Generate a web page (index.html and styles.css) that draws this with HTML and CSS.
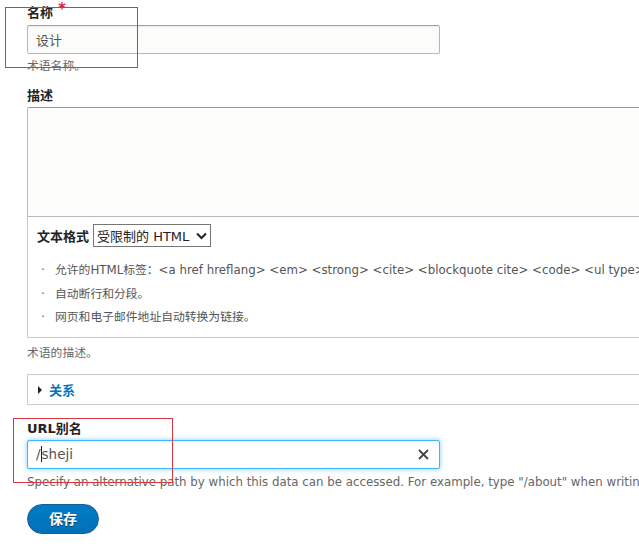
FILE: index.html
```html
<!DOCTYPE html>
<html lang="zh">

<head>
    <meta charset="UTF-8">
    <title>编辑术语</title>
    <link rel="stylesheet" href="styles.css">
</head>

<body>
    <div class="page">
        <div class="form-item item-name">
            <label class="label">名称<span class="required">*</span></label>
            <input class="text-input" type="text" value="设计">
            <div class="description">术语名称。</div>
        </div>

        <div class="form-item item-desc">
            <label class="label">描述</label>
            <textarea class="text-area"></textarea>
            <div class="filter-wrapper">
                <div class="filter-select">
                    <span class="filter-label">文本格式</span>
                    <span class="select-box">受限制的 HTML
                        <svg class="chevron" width="11" height="8" viewBox="0 0 11 8">
                            <path d="M1 1.5 L5.5 6 L10 1.5" fill="none" stroke="#222" stroke-width="2" />
                        </svg>
                    </span>
                </div>
                <ul class="filter-tips">
                    <li>允许的HTML标签：&lt;a href hreflang&gt; &lt;em&gt; &lt;strong&gt; &lt;cite&gt; &lt;blockquote cite&gt; &lt;code&gt; &lt;ul type&gt; &lt;ol start type&gt; &lt;li&gt; &lt;dl&gt; &lt;dt&gt; &lt;dd&gt;</li>
                    <li>自动断行和分段。</li>
                    <li>网页和电子邮件地址自动转换为链接。</li>
                </ul>
            </div>
            <div class="description">术语的描述。</div>
        </div>

        <div class="details">
            <svg class="arrow" width="6" height="8" viewBox="0 0 6 8">
                <path d="M1 0 L5 4 L1 8 Z" fill="#222" />
            </svg>
            <a href="#" class="details-link">关系</a>
        </div>

        <div class="form-item item-url">
            <label class="label">URL别名</label>
            <div class="text-input focused">/<span class="caret"></span>sheji
                <svg class="clear" width="11" height="11" viewBox="0 0 11 11">
                    <path d="M1 1 L10 10 M10 1 L1 10" stroke="#444" stroke-width="1.8" />
                </svg>
            </div>
            <div class="description">Specify an alternative path by which this data can be accessed. For example, type "/about" when writing an about page.</div>
        </div>

        <a href="#" class="button-primary">保存</a>

        <!-- red boxes drawn over the screenshot -->
        <span class="mark mark-name"></span>
        <span class="mark mark-url"></span>
    </div>
</body>

</html>
```

FILE: styles.css
```css
html,
body {
    margin: 0;
    padding: 0;
    overflow: hidden;
    background-color: #fff;
}

body {
    font-family: "DejaVu Sans", "Noto Sans CJK SC", sans-serif;
    font-size: 13px;
    color: #222;
}

.page {
    position: relative;
    width: 900px;
    padding: 4px 0 40px 27px;
}

.form-item {
    width: 100%;
}

.label {
    display: block;
    font-weight: bold;
    font-size: 13px;
    line-height: 18px;
    color: #222;
}

.required {
    color: #e0233c;
    font-size: 15px;
    line-height: 10px;
    vertical-align: top;
    margin-left: 5px;
}

.text-input {
    display: block;
    box-sizing: border-box;
    width: 413px;
    height: 29px;
    margin-top: 3px;
    padding: 0 8px;
    border: 1px solid #b8b8b8;
    border-top-color: #a0a0a0;
    border-radius: 2px;
    background-color: #fcfcfa;
    box-shadow: inset 0 1px 2px rgba(0, 0, 0, 0.08);
    font-family: "DejaVu Sans", "Noto Sans CJK SC", sans-serif;
    font-size: 13px;
    line-height: 27px;
    color: #555;
}

.text-input.focused {
    position: relative;
    margin-top: 2px;
    background-color: #fff;
    border-color: #40b6ff;
    box-shadow: inset 0 1px 2px rgba(0, 0, 0, 0.08), 0 0 5px rgba(64, 182, 255, 0.7);
    font-size: 13.5px;
}

.caret {
    display: inline-block;
    width: 0;
    height: 16px;
    border-left: 1px solid #222;
    vertical-align: -3px;
}

.clear {
    position: absolute;
    right: 10px;
    top: 8px;
}

.description {
    margin-top: 4px;
    font-size: 11.8px;
    line-height: 16px;
    color: #666;
    white-space: nowrap;
}

.item-desc {
    margin-top: 13px;
}

.text-area {
    display: block;
    box-sizing: border-box;
    width: 100%;
    height: 110px;
    margin: 2px 0 0;
    border: 1px solid #b8b8b8;
    border-top-color: #999;
    border-radius: 2px 2px 0 0;
    background-color: #fcfcfa;
    resize: none;
}

.filter-wrapper {
    box-sizing: border-box;
    width: 100%;
    height: 121px;
    padding: 7px 9px 0;
    border: 1px solid #ccc;
    border-top: none;
}

.filter-select {
    display: flex;
    align-items: center;
    gap: 4px;
}

.filter-label {
    font-weight: bold;
    font-size: 13px;
}

.select-box {
    display: inline-flex;
    align-items: center;
    gap: 7px;
    box-sizing: border-box;
    height: 23px;
    padding: 0 3px 0 3px;
    border: 1px solid #767676;
    background-color: #fff;
    font-size: 13px;
    color: #222;
}

.filter-tips {
    list-style: none;
    margin: 12px 0 0;
    padding: 0 0 0 4px;
    font-size: 11.8px;
    line-height: 23.5px;
    color: #555;
    white-space: nowrap;
}

.filter-tips li::before {
    content: "·";
    display: inline-block;
    width: 14px;
    color: #666;
}

.item-desc .description {
    margin-top: 7px;
}

.details {
    display: flex;
    align-items: center;
    gap: 6px;
    box-sizing: border-box;
    width: 100%;
    height: 31px;
    margin-top: 13px;
    padding-left: 9px;
    border: 1px solid #ccc;
}

.details-link {
    color: #0074bd;
    font-weight: bold;
    font-size: 13px;
    text-decoration: none;
}

.item-url {
    margin-top: 15px;
}

.item-url .description {
    margin-top: 5px;
}

.button-primary {
    display: inline-block;
    box-sizing: border-box;
    width: 72px;
    height: 30px;
    margin-top: 14px;
    border: 1px solid #1e5c90;
    border-radius: 20em;
    background: linear-gradient(to bottom, #007bc6, #0071b8);
    color: #fff;
    font-weight: bold;
    font-size: 14px;
    line-height: 28px;
    text-align: center;
    text-decoration: none;
    text-shadow: 0 1px rgba(0, 0, 0, 0.5);
}

.mark {
    position: absolute;
    border: 1px solid #d9363e;
}

.mark-name {
    left: 5px;
    top: 7px;
    width: 131px;
    height: 59px;
}

.mark-url {
    left: 13px;
    top: 418px;
    width: 158px;
    height: 63px;
}
```
